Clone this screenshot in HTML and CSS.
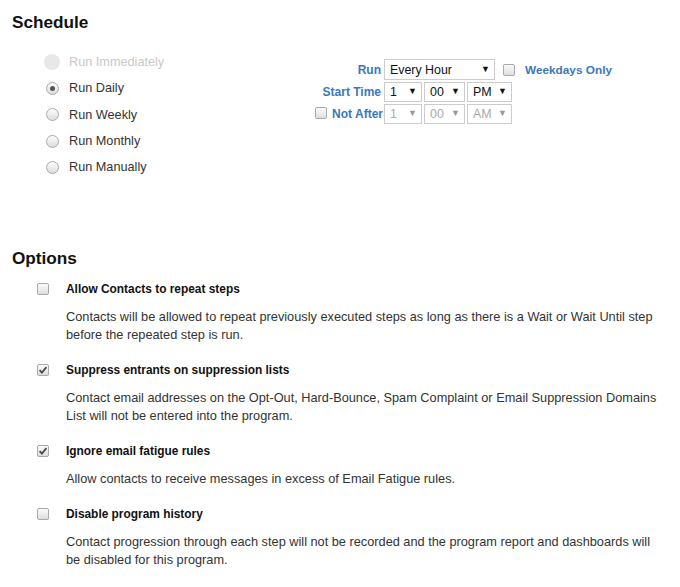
FILE: index.html
```html
<!DOCTYPE html>
<html>
<head>
<meta charset="utf-8">
<link rel="stylesheet" href="styles.css">
</head>
<body>
<section class="schedule">
  <h2 class="section-title">Schedule</h2>
  <div class="schedule-body">
    <ul class="radio-list">
      <li class="radio-row disabled"><span class="radio"></span><span class="radio-label">Run Immediately</span></li>
      <li class="radio-row"><span class="radio checked"></span><span class="radio-label">Run Daily</span></li>
      <li class="radio-row"><span class="radio"></span><span class="radio-label">Run Weekly</span></li>
      <li class="radio-row"><span class="radio"></span><span class="radio-label">Run Monthly</span></li>
      <li class="radio-row"><span class="radio"></span><span class="radio-label">Run Manually</span></li>
    </ul>
    <div class="run-grid">
      <span class="field-label">Run</span>
      <div class="field-controls">
        <span class="select select-wide">Every Hour<span class="arrow">&#9660;</span></span>
        <span class="checkbox box-inline"></span>
        <span class="field-label weekday">Weekdays Only</span>
      </div>
      <span class="field-label">Start Time</span>
      <div class="field-controls">
        <span class="select s-hour">1<span class="arrow">&#9660;</span></span>
        <span class="select s-min">00<span class="arrow">&#9660;</span></span>
        <span class="select s-ampm">PM<span class="arrow">&#9660;</span></span>
      </div>
      <span class="field-label not-after"><span class="checkbox"></span>Not After</span>
      <div class="field-controls">
        <span class="select s-hour off">1<span class="arrow">&#9660;</span></span>
        <span class="select s-min off">00<span class="arrow">&#9660;</span></span>
        <span class="select s-ampm off">AM<span class="arrow">&#9660;</span></span>
      </div>
    </div>
  </div>
</section>

<section class="options">
  <h2 class="section-title">Options</h2>
  <div class="option">
    <span class="checkbox"></span>
    <div class="option-text">
      <div class="option-title">Allow Contacts to repeat steps</div>
      <p class="option-desc">Contacts will be allowed to repeat previously executed steps as long as there is a Wait or Wait Until step before the repeated step is run.</p>
    </div>
  </div>
  <div class="option">
    <span class="checkbox checked"><svg viewBox="0 0 12 12" width="12" height="12"><path d="M2.6 6.2 L4.9 8.6 L9.4 3.2" fill="none" stroke="#4a4a4a" stroke-width="1.8"/></svg></span>
    <div class="option-text">
      <div class="option-title">Suppress entrants on suppression lists</div>
      <p class="option-desc">Contact email addresses on the Opt-Out, Hard-Bounce, Spam Complaint or Email Suppression Domains List will not be entered into the program.</p>
    </div>
  </div>
  <div class="option">
    <span class="checkbox checked"><svg viewBox="0 0 12 12" width="12" height="12"><path d="M2.6 6.2 L4.9 8.6 L9.4 3.2" fill="none" stroke="#4a4a4a" stroke-width="1.8"/></svg></span>
    <div class="option-text">
      <div class="option-title">Ignore email fatigue rules</div>
      <p class="option-desc">Allow contacts to receive messages in excess of Email Fatigue rules.</p>
    </div>
  </div>
  <div class="option">
    <span class="checkbox"></span>
    <div class="option-text">
      <div class="option-title">Disable program history</div>
      <p class="option-desc">Contact progression through each step will not be recorded and the program report and dashboards will be disabled for this program.</p>
    </div>
  </div>
</section>
</body>
</html>
```

FILE: styles.css
```css
html, body {
  margin: 0;
  padding: 0;
  background: #fff;
}
body {
  font-family: "Liberation Sans", Arial, sans-serif;
  color: #333;
  font-size: 12.7px;
}
.section-title {
  margin: 0;
  padding-left: 12px;
  font-size: 17.2px;
  line-height: 22px;
  font-weight: bold;
  color: #111;
}
.schedule {
  padding-top: 11px;
}
.schedule-body {
  display: flex;
  margin-top: 16px;
}
.radio-list {
  list-style: none;
  margin: 0;
  padding: 0 0 0 44px;
  width: 256px;
}
.radio-row {
  display: flex;
  align-items: center;
  height: 26.3px;
}
.radio {
  box-sizing: border-box;
  width: 13px;
  height: 13px;
  margin-left: 2px;
  margin-right: 10px;
  border-radius: 50%;
  border: 1px solid #a9a9a9;
  background: linear-gradient(#fdfdfd, #dcdcdc);
  position: relative;
}
.radio.checked::after {
  content: "";
  position: absolute;
  left: 3px;
  top: 3px;
  width: 5px;
  height: 5px;
  border-radius: 50%;
  background: #555;
}
.disabled .radio {
  width: 16px;
  height: 16px;
  margin-left: 0;
  margin-right: 9px;
  border: none;
  background: #e8e8e8;
}
.disabled .radio-label {
  color: #c8c8c8;
}
.radio-label {
  line-height: 18px;
}
.run-grid {
  display: grid;
  grid-template-columns: 84px auto;
  row-gap: 2px;
  margin-top: 10px;
  align-content: start;
}
.field-label {
  font-size: 12px;
  font-weight: bold;
  color: #3b78b7;
  text-align: right;
  align-self: center;
  padding-right: 3px;
  line-height: 20px;
}
.field-label.not-after {
  display: flex;
  justify-content: flex-end;
  align-items: center;
  padding-right: 1px;
}
.not-after .checkbox {
  margin-right: 5px;
  margin-top: -3px;
}
.field-controls {
  display: flex;
  align-items: center;
  gap: 2px;
}
.select {
  box-sizing: border-box;
  height: 20px;
  border: 1px solid #ccc;
  display: flex;
  align-items: center;
  justify-content: space-between;
  padding: 0 4px 0 5px;
  color: #111;
  font-size: 12.4px;
  background: #fff;
}
.select-wide { height: 21px; }
.select .arrow {
  font-size: 9px;
  color: #111;
  margin-top: -2px;
}
.select.off {
  color: #aaa;
}
.select.off .arrow {
  color: #999;
}
.select-wide { width: 111px; }
.s-hour { width: 38px; }
.s-min { width: 41px; }
.s-ampm { width: 45px; }
.box-inline {
  margin-left: 6px;
  margin-right: 8px;
}
.field-label.weekday {
  padding-right: 0;
  text-align: left;
  font-size: 11.8px;
}
.checkbox {
  box-sizing: border-box;
  display: inline-block;
  width: 12px;
  height: 12px;
  border: 1px solid #a9a9a9;
  border-radius: 2px;
  background: linear-gradient(#fbfbfb, #dedede);
  flex: none;
  position: relative;
}
.checkbox svg {
  position: absolute;
  left: -1px;
  top: -1px;
}
.options {
  margin-top: 67px;
}
.options .section-title {
  margin-bottom: 11px;
}
.option {
  display: flex;
  padding-left: 37px;
  margin-bottom: 17px;
}
.option > .checkbox {
  margin-top: 3px;
  margin-right: 17px;
}
.option-text {
  flex: 1;
  padding-right: 18px;
}
.option-title {
  font-size: 11.9px;
  font-weight: bold;
  color: #111;
  line-height: 18px;
}
.option-desc {
  margin: 10px 0 0;
  line-height: 18px;
  font-size: 12.75px;
  color: #333;
}
```
